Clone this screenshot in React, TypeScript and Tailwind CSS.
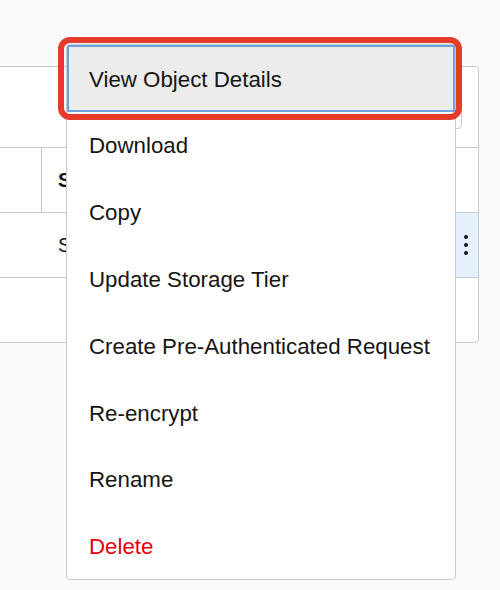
const items = [
  "View Object Details",
  "Download",
  "Copy",
  "Update Storage Tier",
  "Create Pre-Authenticated Request",
  "Re-encrypt",
  "Rename",
];

export default function App() {
  return (
    <div className="relative min-h-screen overflow-hidden bg-[#fafafa] font-['Liberation_Sans',Arial,sans-serif] text-[#161513]">
      <div className="pt-[66px]">
        <div className="-ml-[12px] w-[491px] rounded-r border border-[#c5cad1] bg-white">
          <div className="flex h-[81px] items-end justify-end border-b border-[#c5cad1] pb-[18px] pr-[16px]">
            <div className="h-[45px] w-[220px] rounded border border-[#c5cad1] bg-white" />
          </div>
          <div className="flex h-[65px] border-b border-[#c5cad1] text-[20px]">
            <div className="w-[53px] border-r border-[#c5cad1]" />
            <div className="flex items-center pl-[16px] font-bold">Storage Tier</div>
          </div>
          <div className="flex h-[65px] border-b border-[#c5cad1] text-[20px]">
            <div className="w-[53px]" />
            <div className="flex flex-1 items-center pl-[16px]">Standard</div>
            <div className="flex w-[40px] items-center justify-end bg-[#e4f0fb] pr-[10px]">
              <div className="flex flex-col gap-[4px]">
                <span className="block h-[4px] w-[4px] rounded-full bg-[#161513]" />
                <span className="block h-[4px] w-[4px] rounded-full bg-[#161513]" />
                <span className="block h-[4px] w-[4px] rounded-full bg-[#161513]" />
              </div>
            </div>
          </div>
          <div className="h-[64px]" />
        </div>
      </div>

      <div className="absolute left-[66px] top-[44px] w-[390px] rounded border border-[#c5cad1] bg-white text-[22.3px]">
        {items.map((label, i) => (
          <div
            key={label}
            className={
              i === 0
                ? "flex h-[66.8px] items-center border-2 border-[#72a2dd] bg-[#ececec] pl-[20px] pt-[2px]"
                : "flex h-[66.8px] items-center pl-[22px] pt-[2px]"
            }
          >
            {label}
          </div>
        ))}
        <div className="flex h-[66.8px] items-center pl-[22px] pt-[2px] text-[#e3000b]">Delete</div>
      </div>

      <div className="absolute left-[58px] top-[37px] h-[83px] w-[404px] rounded-[12px] border-[6px] border-[#e63a2b]" />
    </div>
  );
}
